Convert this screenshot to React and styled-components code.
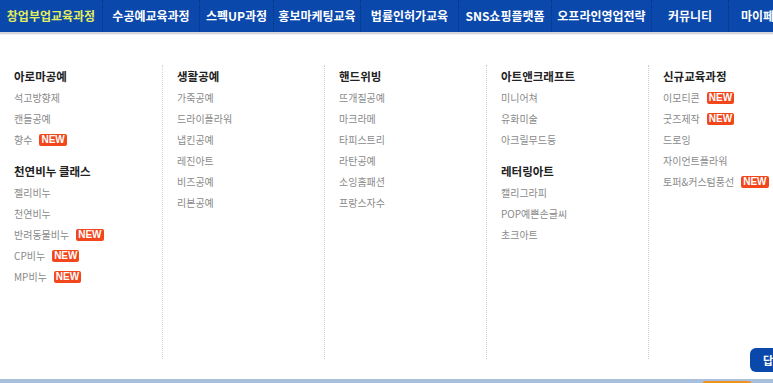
import React from 'react';
import styled, { createGlobalStyle } from 'styled-components';

const GlobalStyle = createGlobalStyle`
	html, body {
		margin: 0;
		padding: 0;
		overflow: hidden;
		background: #fff;
	}
	body {
		font-family: "Noto Sans CJK KR", "Noto Sans", sans-serif;
	}
`;

const menus = [
	{ label: '창업부업교육과정', w: 102, active: true },
	{ label: '수공예교육과정', w: 97 },
	{ label: '스펙UP과정', w: 74 },
	{ label: '홍보마케팅교육', w: 87 },
	{ label: '법률인허가교육', w: 98 },
	{ label: 'SNS쇼핑플랫폼', w: 93 },
	{ label: '오프라인영업전략', w: 100 },
	{ label: '커뮤니티', w: 77 },
	{ label: '마이페이지', w: 80 },
];

const columns = [
	[
		{ title: '아로마공예', items: [['석고방향제'], ['캔들공예'], ['향수', true]] },
		{ title: '천연비누 클래스', items: [['젤리비누'], ['천연비누'], ['반려동물비누', true], ['CP비누', true], ['MP비누', true]] },
	],
	[
		{ title: '생활공예', items: [['가죽공예'], ['드라이플라워'], ['냅킨공예'], ['레진아트'], ['비즈공예'], ['리본공예']] },
	],
	[
		{ title: '핸드위빙', items: [['뜨개질공예'], ['마크라메'], ['타피스트리'], ['라탄공예'], ['소잉홈패션'], ['프랑스자수']] },
	],
	[
		{ title: '아트앤크래프트', items: [['미니어쳐'], ['유화미술'], ['아크릴무드등']] },
		{ title: '레터링아트', items: [['캘리그라피'], ['POP예쁜손글씨'], ['초크아트']] },
	],
	[
		{ title: '신규교육과정', items: [['이모티콘', true], ['굿즈제작', true], ['드로잉'], ['자이언트플라워'], ['토퍼&커스텀풍선', true]] },
	],
];

const Page = styled.div`
	position: relative;
	width: 773px;
	height: 383px;
	overflow: hidden;
`;

const NavBar = styled.nav`
	display: flex;
	width: 900px;
	height: 32px;
	background: #0b48ab;
	border-bottom: 2px solid #d4d6da;
`;

const NavItem = styled.a`
	flex: none;
	width: ${p => p.$w}px;
	box-sizing: border-box;
	text-align: center;
	line-height: 32px;
	font-size: 12px;
	font-weight: 700;
	letter-spacing: 0;
	color: ${p => (p.$active ? '#e2ee5e' : '#fff')};
	border-left: ${p => (p.$first ? 'none' : '1px dotted #06357f')};
	white-space: nowrap;
`;

const Dropdown = styled.div`
	display: flex;
	padding: 30px 0 20px;
	border-top: 1px solid #f3eef2;
`;

const Column = styled.div`
	flex: none;
	width: 162px;
	height: 294px;
	box-sizing: border-box;
	padding: 1px 0 0 14px;
	border-left: ${p => (p.$first ? 'none' : `1px dotted ${p.$gray ? '#d6d0d6' : '#dcc4d8'}`)};
`;

const Group = styled.div`
	& + & {
		margin-top: 11px;
	}
`;

const Heading = styled.h3`
	margin: 0;
	font-size: 11.5px;
	font-weight: 700;
	letter-spacing: 0;
	line-height: 21px;
	color: #222;
`;

const Item = styled.div`
	display: flex;
	align-items: center;
	gap: 7px;
	font-size: 10px;
	letter-spacing: 0;
	line-height: 21px;
	color: #8a8a8a;
`;

const NewBadge = styled.span`
	display: inline-block;
	padding: 0 2px;
	height: 12px;
	line-height: 12px;
	border-radius: 2px;
	background: #f2461c;
	color: #fff;
	font-family: "Liberation Sans", Arial, sans-serif;
	font-size: 10px;
	font-weight: 700;
	letter-spacing: 0;
`;

const BottomBar = styled.div`
	position: relative;
	height: 4px;
	background: #a9c0dc;
`;

const OrangeTab = styled.div`
	position: absolute;
	left: 702px;
	top: 2px;
	width: 50px;
	height: 10px;
	border-radius: 4px 4px 0 0;
	background: #f3911f;
`;

const FloatButton = styled.button`
	position: absolute;
	left: 750px;
	top: 348px;
	width: 60px;
	height: 24px;
	padding: 0 0 0 13px;
	border: none;
	border-radius: 6px;
	background: #0b48ab;
	color: #fff;
	text-align: left;
	font-family: inherit;
	font-size: 11px;
	font-weight: 700;
`;

export default function App() {
	return (
		<Page>
			<GlobalStyle />
			<NavBar>
				{menus.map((m, i) => (
					<NavItem key={m.label} $w={m.w} $active={m.active} $first={i === 0}>
						{m.label}
					</NavItem>
				))}
			</NavBar>
			<Dropdown>
				{columns.map((groups, i) => (
					<Column key={i} $first={i === 0} $gray={i === 1}>
						{groups.map(g => (
							<Group key={g.title}>
								<Heading>{g.title}</Heading>
								{g.items.map(([name, isNew]) => (
									<Item key={name}>
										{name}
										{isNew && <NewBadge>NEW</NewBadge>}
									</Item>
								))}
							</Group>
						))}
					</Column>
				))}
			</Dropdown>
			<BottomBar>
				<OrangeTab />
			</BottomBar>
			<FloatButton>답변</FloatButton>
		</Page>
	);
}
